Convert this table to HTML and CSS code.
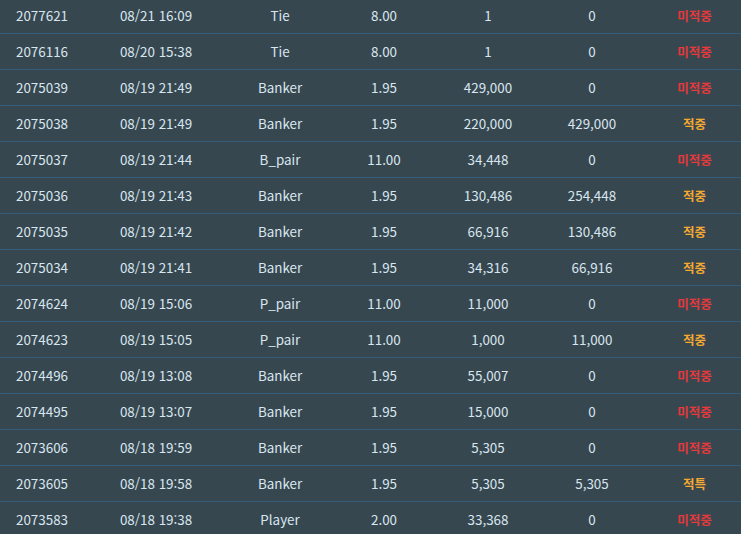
FILE: index.html
```html
<!DOCTYPE html>
<html lang="ko">
<head>
    <meta charset="UTF-8">
    <meta name="viewport" content="width=device-width, initial-scale=1.0">
    <title>베팅내역</title>
    <link rel="stylesheet" href="styles.css">
</head>
<body>
    <div class="history">
        <table class="bet-table">
            <colgroup>
                <col class="c-no"><col class="c-date"><col class="c-pick"><col class="c-odds"><col class="c-bet"><col class="c-win"><col class="c-result">
            </colgroup>
            <tbody>
                <tr><td>2077621</td><td>08/21 16:09</td><td>Tie</td><td>8.00</td><td>1</td><td>0</td><td class="lose">미적중</td></tr>
                <tr><td>2076116</td><td>08/20 15:38</td><td>Tie</td><td>8.00</td><td>1</td><td>0</td><td class="lose">미적중</td></tr>
                <tr><td>2075039</td><td>08/19 21:49</td><td>Banker</td><td>1.95</td><td>429,000</td><td>0</td><td class="lose">미적중</td></tr>
                <tr><td>2075038</td><td>08/19 21:49</td><td>Banker</td><td>1.95</td><td>220,000</td><td>429,000</td><td class="win">적중</td></tr>
                <tr><td>2075037</td><td>08/19 21:44</td><td>B_pair</td><td>11.00</td><td>34,448</td><td>0</td><td class="lose">미적중</td></tr>
                <tr><td>2075036</td><td>08/19 21:43</td><td>Banker</td><td>1.95</td><td>130,486</td><td>254,448</td><td class="win">적중</td></tr>
                <tr><td>2075035</td><td>08/19 21:42</td><td>Banker</td><td>1.95</td><td>66,916</td><td>130,486</td><td class="win">적중</td></tr>
                <tr><td>2075034</td><td>08/19 21:41</td><td>Banker</td><td>1.95</td><td>34,316</td><td>66,916</td><td class="win">적중</td></tr>
                <tr><td>2074624</td><td>08/19 15:06</td><td>P_pair</td><td>11.00</td><td>11,000</td><td>0</td><td class="lose">미적중</td></tr>
                <tr><td>2074623</td><td>08/19 15:05</td><td>P_pair</td><td>11.00</td><td>1,000</td><td>11,000</td><td class="win">적중</td></tr>
                <tr><td>2074496</td><td>08/19 13:08</td><td>Banker</td><td>1.95</td><td>55,007</td><td>0</td><td class="lose">미적중</td></tr>
                <tr><td>2074495</td><td>08/19 13:07</td><td>Banker</td><td>1.95</td><td>15,000</td><td>0</td><td class="lose">미적중</td></tr>
                <tr><td>2073606</td><td>08/18 19:59</td><td>Banker</td><td>1.95</td><td>5,305</td><td>0</td><td class="lose">미적중</td></tr>
                <tr><td>2073605</td><td>08/18 19:58</td><td>Banker</td><td>1.95</td><td>5,305</td><td>5,305</td><td class="win">적특</td></tr>
                <tr><td>2073583</td><td>08/18 19:38</td><td>Player</td><td>2.00</td><td>33,368</td><td>0</td><td class="lose">미적중</td></tr>
            </tbody>
        </table>
    </div>
</body>
</html>
```

FILE: styles.css
```css
body {
    margin: 0;
    padding: 0;
    background-color: #37474f;
    font-family: "Noto Sans CJK KR", "Noto Sans", sans-serif;
    overflow: hidden;
}
.history {
    margin-top: -2px;
}
.bet-table {
    width: 741px;
    border-collapse: collapse;
    table-layout: fixed;
}
.c-no { width: 84px; }
.c-date { width: 144px; }
.c-pick { width: 104px; }
.c-odds { width: 104px; }
.c-bet { width: 104px; }
.c-win { width: 104px; }
.c-result { width: 97px; }
.bet-table td {
    height: 34px;
    padding: 1px 0 0;
    border-bottom: 1px solid #335d79;
    text-align: center;
    vertical-align: middle;
    color: #d8e6f0;
    font-size: 13.4px;
    line-height: 1;
}
.bet-table td.lose,
.bet-table td.win {
    padding-left: 4px;
    font-size: 12.5px;
    font-weight: bold;
}
.bet-table td.lose {
    color: #e5393c;
}
.bet-table td.win {
    color: #f5a832;
}
```
